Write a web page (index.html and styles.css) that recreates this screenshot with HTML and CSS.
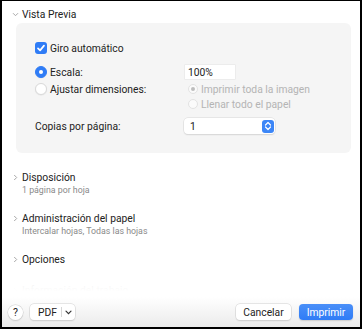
FILE: index.html
```html
<!DOCTYPE html>
<html lang="es">
<head>
<meta charset="utf-8">
<link rel="stylesheet" href="styles.css">
</head>
<body>
<div class="window">
  <div class="scroll">
    <div class="sec-head open">
      <svg class="chev" width="7" height="7" viewBox="0 0 7 7"><path d="M1 2.2 L3.5 4.7 L6 2.2" fill="none" stroke="#a8a8a8" stroke-width="1"/></svg>
      <span class="sec-title">Vista Previa</span>
    </div>
    <div class="panel">
      <div class="row r1">
        <span class="check"><svg width="12" height="12" viewBox="0 0 12 12"><path d="M3 6.3 L5.1 8.4 L9 3.6" fill="none" stroke="#fff" stroke-width="1.7" stroke-linecap="round" stroke-linejoin="round"/></svg></span>
        <span class="lbl">Giro automático</span>
      </div>
      <div class="row r2">
        <div class="left"><span class="radio on"></span><span class="lbl">Escala:</span></div>
        <div class="right"><span class="field">100%</span></div>
      </div>
      <div class="row r3">
        <div class="left"><span class="radio"></span><span class="lbl">Ajustar dimensiones:</span></div>
        <div class="right sub"><span class="radio dis on"></span><span class="lbl dim">Imprimir toda la imagen</span></div>
      </div>
      <div class="row r4">
        <div class="left"></div>
        <div class="right sub"><span class="radio dis"></span><span class="lbl dim">Llenar todo el papel</span></div>
      </div>
      <div class="row r5">
        <div class="left"><span class="lbl copies">Copias por página:</span></div>
        <div class="right">
          <span class="select"><span class="sel-val">1</span>
            <span class="stepper"><svg width="8" height="10" viewBox="0 0 8 10"><path d="M1.5 4 L4 1.5 L6.5 4 M1.5 6 L4 8.5 L6.5 6" fill="none" stroke="#fff" stroke-width="1.2" stroke-linecap="round" stroke-linejoin="round"/></svg></span>
          </span>
        </div>
      </div>
    </div>

    <div class="sec s-disp">
      <div class="sec-head">
        <svg class="chev" width="7" height="7" viewBox="0 0 7 7"><path d="M2.2 1 L4.7 3.5 L2.2 6" fill="none" stroke="#a8a8a8" stroke-width="1"/></svg>
        <span class="sec-title">Disposición</span>
      </div>
      <div class="sec-sub">1 página por hoja</div>
    </div>
    <div class="sec s-adm">
      <div class="sec-head">
        <svg class="chev" width="7" height="7" viewBox="0 0 7 7"><path d="M2.2 1 L4.7 3.5 L2.2 6" fill="none" stroke="#a8a8a8" stroke-width="1"/></svg>
        <span class="sec-title">Administración del papel</span>
      </div>
      <div class="sec-sub">Intercalar hojas, Todas las hojas</div>
    </div>
    <div class="sec s-opt">
      <div class="sec-head">
        <svg class="chev" width="7" height="7" viewBox="0 0 7 7"><path d="M2.2 1 L4.7 3.5 L2.2 6" fill="none" stroke="#a8a8a8" stroke-width="1"/></svg>
        <span class="sec-title">Opciones</span>
      </div>
    </div>
    <div class="sec s-info">
      <div class="sec-head">
        <svg class="chev" width="7" height="7" viewBox="0 0 7 7"><path d="M2.2 1 L4.7 3.5 L2.2 6" fill="none" stroke="#a8a8a8" stroke-width="1"/></svg>
        <span class="sec-title">Información del trabajo</span>
      </div>
    </div>
    <div class="fade"></div>
  </div>
  <div class="footer">
    <span class="help">?</span>
    <span class="btn pdf"><span class="pdf-txt">PDF</span><span class="div"></span><svg width="7" height="5" viewBox="0 0 7 5"><path d="M1 1.2 L3.5 3.7 L6 1.2" fill="none" stroke="#333" stroke-width="1.2" stroke-linecap="round"/></svg></span>
    <span class="spacer"></span>
    <span class="btn cancel">Cancelar</span>
    <span class="btn primary">Imprimir</span>
  </div>
</div>
</body>
</html>
```

FILE: styles.css
```css
html, body {
  margin: 0;
  padding: 0;
  background: #000;
}
body {
  width: 362px;
  height: 329px;
  overflow: hidden;
  font-family: Roboto, "Noto Sans", "Liberation Sans", sans-serif;
  font-size: 10px;
  color: #222;
}
.window {
  box-sizing: border-box;
  width: 362px;
  height: 329px;
  border-style: solid;
  border-color: #000;
  border-width: 1px 2px 2px 2px;
  background: #fff;
  display: flex;
  flex-direction: column;
}
.scroll {
  flex: 1;
  position: relative;
  overflow: hidden;
  padding-top: 6px;
}
.sec-head {
  display: flex;
  align-items: center;
  height: 14px;
  padding-left: 10px;
}
.chev {
  width: 7px;
  height: 7px;
  margin-right: 3px;
}
.sec-title {
  font-size: 10.3px;
}
.panel {
  margin: 2px 9px 0 14px;
  height: 130px;
  box-sizing: border-box;
  background: #f5f5f5;
  border-radius: 6px;
  padding: 18px 0 0 19px;
}
.row {
  display: flex;
  align-items: center;
}
.r1 { height: 14px; }
.r2 { height: 16px; margin-top: 9px; }
.r3 { height: 14px; margin-top: 2px; }
.r4 { height: 14px; margin-top: 1px; }
.r5 { height: 16px; margin-top: 7px; }
.left {
  width: 149px;
  display: flex;
  align-items: center;
}
.right {
  display: flex;
  align-items: center;
}
.right.sub { padding-left: 4px; }
.check {
  width: 12px;
  height: 12px;
  border-radius: 3px;
  background: #2f7cf6;
  display: flex;
  margin-right: 3px;
}
.lbl { font-size: 10.3px; }
.dim { color: #b4b4b4; }
.radio {
  box-sizing: border-box;
  width: 12px;
  height: 12px;
  border-radius: 50%;
  background: #fff;
  border: 1px solid #d9d9d9;
  box-shadow: 0 0.5px 1px rgba(0,0,0,0.08);
  margin-right: 3px;
  position: relative;
  flex: none;
}
.radio.on {
  background: #2f7cf6;
  border-color: #2f7cf6;
}
.radio.on::after {
  content: "";
  position: absolute;
  left: 3px;
  top: 3px;
  width: 4px;
  height: 4px;
  border-radius: 50%;
  background: #fff;
}
.radio.dis {
  width: 10px;
  height: 10px;
  border-color: #e3e3e3;
  background: #fbfbfb;
  box-shadow: none;
}
.radio.dis.on::after {
  left: 2px;
  top: 2px;
  width: 4px;
  height: 4px;
  background: #bdbdbd;
}
.field {
  box-sizing: border-box;
  width: 50px;
  height: 14px;
  background: #fff;
  margin-left: 1px;
  padding-left: 3px;
  display: flex;
  align-items: center;
  font-size: 10.3px;
  box-shadow: 0 0 0 0.5px #e4e4e4;
}
.select {
  box-sizing: border-box;
  width: 91px;
  height: 16px;
  background: #fff;
  border-radius: 4px;
  box-shadow: 0 0 0 0.5px #d8d8d8, 0 1px 1.5px rgba(0,0,0,0.12);
  display: flex;
  align-items: center;
  justify-content: space-between;
  padding: 0 1px 0 6px;
  font-size: 10.3px;
}
.stepper {
  width: 12px;
  height: 13px;
  border-radius: 3px;
  background: #3c86f7;
  display: flex;
  align-items: center;
  justify-content: center;
}
.s-disp { margin-top: 17px; }
.s-adm { margin-top: 15px; }
.s-opt { margin-top: 15px; }
.s-info { margin-top: 17px; }
.sec-sub {
  padding-left: 20px;
  font-size: 8.8px;
  color: #8a8a8a;
  height: 12px;
  line-height: 13px;
}
.fade {
  position: absolute;
  left: 0;
  right: 0;
  bottom: 0;
  height: 22px;
  background: linear-gradient(rgba(255,255,255,0.8), rgba(255,255,255,0.94) 40%, #fff 75%);
}
.footer {
  height: 30px;
  flex: none;
  display: flex;
  align-items: center;
  padding: 0 7px 0 6px;
  background: linear-gradient(#fff, #ebebeb);
}
.help {
  width: 15px;
  height: 15px;
  border-radius: 50%;
  background: #fff;
  box-shadow: 0 0 0 0.5px #d0d0d0, 0 1px 1.5px rgba(0,0,0,0.15);
  display: flex;
  align-items: center;
  justify-content: center;
  font-size: 10.5px;
  margin-right: 7px;
}
.btn {
  box-sizing: border-box;
  height: 16px;
  border-radius: 4px;
  background: #fff;
  box-shadow: 0 0 0 0.5px #d0d0d0, 0 1px 1.5px rgba(0,0,0,0.14);
  display: flex;
  align-items: center;
  justify-content: center;
  font-size: 10.3px;
}
.pdf {
  width: 45px;
  justify-content: flex-start;
  padding-left: 8px;
}
.pdf-txt { width: 23px; }
.pdf .div {
  width: 1px;
  height: 10px;
  background: #d6d6d6;
  margin-right: 3px;
}
.spacer { flex: 1; }
.cancel { width: 55px; margin-right: 8px; }
.primary {
  width: 54px;
  background: linear-gradient(#4a8ff8, #2f7cf6);
  color: #fff;
  box-shadow: 0 1px 1.5px rgba(0,0,0,0.15);
}
```
